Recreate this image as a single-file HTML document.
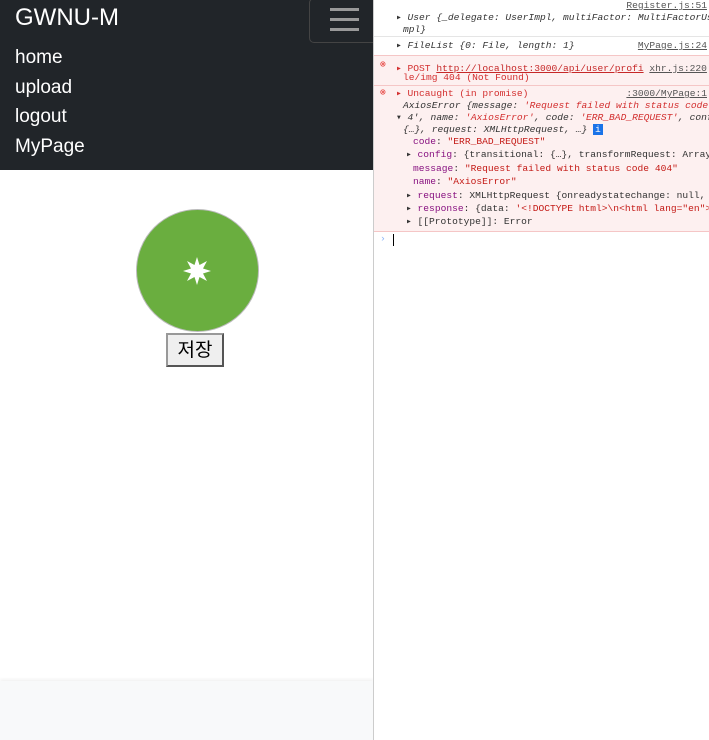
<!DOCTYPE html>
<html><head><meta charset="utf-8"><style>
body{margin:0;width:709px;height:740px;overflow:hidden;background:#fff;font-family:"Liberation Sans","Noto Sans CJK KR",sans-serif;position:relative}
#left{position:absolute;left:0;top:0;width:373px;height:740px;background:#fff;border-right:1px solid #ccc;overflow:hidden}
#nav{position:absolute;left:0;top:0;width:373px;height:170px;background:#212529;color:#fff;overflow:hidden}
.brand{position:absolute;left:15px;top:4px;font-size:24px}
.nl{position:absolute;left:15px;font-size:19px}
.tog{position:absolute;left:309px;top:-2px;width:70px;height:43px;border:1px solid #444;border-radius:5px}
.bar{position:absolute;left:20px;width:29px;height:3px;background:#999}
#foot{position:absolute;left:0;top:681px;width:373px;height:60px;background:#f8f9fa;box-shadow:0 -2px 3px rgba(0,0,0,.05)}
.circ{position:absolute;left:136px;top:209px;width:123px;height:123px;border-radius:50%;background:#6aae3f;border:1px solid #bbb;box-sizing:border-box}
.btn{position:absolute;left:166px;top:333px;width:58px;height:34px;border:2px solid #555;border-top-color:#999;border-left-color:#999;background:#efefef;font-size:19px;text-align:center;line-height:32px;box-sizing:border-box}
#con{position:absolute;left:374px;top:0;width:335px;height:740px;font-family:"Liberation Mono","DejaVu Sans Mono",monospace;font-size:9.6px;color:#333;overflow:hidden}
.l{position:absolute;white-space:nowrap}
.it{font-style:italic}
.err{position:absolute;left:0;width:335px;background:#fdf0f0;border-top:1px solid #f5c6c6}
.r{color:#d32f2f}.u{text-decoration:underline;color:#555}
.pk{color:#881280}.s{color:#c41a16}
</style></head><body>
<div id="left">
<div id="nav">
<div class="brand">GWNU-M</div>
<div class="nl" style="top:47px">home</div>
<div class="nl" style="top:77px">upload</div>
<div class="nl" style="top:106px">logout</div>
<div class="nl" style="top:136px">MyPage</div>
<div class="tog"><div class="bar" style="top:9px"></div><div class="bar" style="top:19px"></div><div class="bar" style="top:29px"></div></div>
</div>
<div class="circ"><svg style="position:absolute;left:45px;top:46px" width="30" height="30" viewBox="0 0 30 30"><polygon fill="#fff" points="15,1 17.5,9 25,5 21,12.5 29,15 21,17.5 25,25 17.5,21 15,29 12.5,21 5,25 9,17.5 1,15 9,12.5 5,5 12.5,9"/></svg></div>
<div class="btn">저장</div>
<div id="foot"></div>
</div>
<div id="con">
<div class="l u" style="right:2px;top:0">Register.js:51</div>
<div class="l it" style="left:22px;top:12px">▸ User {_delegate: UserImpl, multiFactor: MultiFactorUserI</div>
<div class="l it" style="left:29px;top:24px">mpl}</div>
<div style="position:absolute;left:0;top:36px;width:335px;border-top:1px solid #e5e5e5"></div>
<div class="l it" style="left:22px;top:40px">▸ FileList {0: File, length: 1}</div>
<div class="l u" style="right:2px;top:40px">MyPage.js:24</div>
<div class="err" style="top:55px;height:29px"></div>
<div class="l" style="left:6px;top:59px;color:#e53935">⊗</div>
<div class="l r" style="left:22px;top:60px">▸ POST <span class="u" style="color:#c62828">http://localhost:3000/api/user/profi</span> <span class="u">xhr.js:220</span> <span style="color:#1a73e8">⓵</span></div>
<div class="l r" style="left:29px;top:72px">le/img 404 (Not Found)</div>
<div class="err" style="top:85px;height:145px;border-bottom:1px solid #f5c6c6"></div>
<div class="l" style="left:6px;top:87px;color:#e53935">⊗</div>
<div class="l r" style="left:22px;top:88px">▸ Uncaught (in promise)</div>
<div class="l u" style="right:2px;top:88px">:3000/MyPage:1</div>
<div class="l it r" style="left:29px;top:100px"><span style="color:#333">AxiosError {message: </span>'Request failed with status code 40</div>
<div class="l it" style="left:22px;top:112px">▾ 4', name: <span class="r">'AxiosError'</span>, code: <span class="r">'ERR_BAD_REQUEST'</span>, config:</div>
<div class="l it" style="left:29px;top:124px">{…}, request: XMLHttpRequest, …} <span style="background:#1a73e8;color:#fff;font-style:normal;padding:0 2px">i</span></div>
<div class="l" style="left:39px;top:136px"><span class="pk">code</span>: <span class="s">"ERR_BAD_REQUEST"</span></div>
<div class="l" style="left:32px;top:149px">▸ <span class="pk">config</span>: {transitional: {…}, transformRequest: Array(1)</div>
<div class="l" style="left:39px;top:163px"><span class="pk">message</span>: <span class="s">"Request failed with status code 404"</span></div>
<div class="l" style="left:39px;top:176px"><span class="pk">name</span>: <span class="s">"AxiosError"</span></div>
<div class="l" style="left:32px;top:190px">▸ <span class="pk">request</span>: XMLHttpRequest {onreadystatechange: null, rea</div>
<div class="l" style="left:32px;top:203px">▸ <span class="pk">response</span>: {data: <span class="s">'&lt;!DOCTYPE html&gt;\n&lt;html lang="en"&gt;\n&lt;</span></div>
<div class="l" style="left:32px;top:216px">▸ [[Prototype]]: Error</div>
<div class="l" style="left:6px;top:233px;color:#8ab4f8">›</div>
<div style="position:absolute;left:19px;top:234px;width:1px;height:12px;background:#000"></div>
</div>
</body></html>
